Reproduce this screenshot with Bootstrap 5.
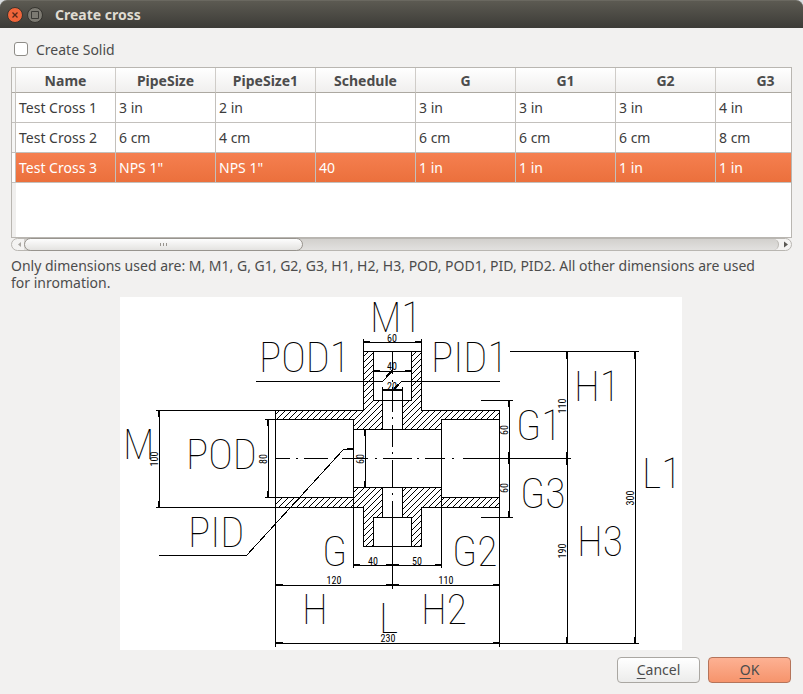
<!DOCTYPE html>
<html lang="en">
<head>
<meta charset="utf-8">
<meta name="viewport" content="width=device-width, initial-scale=1">
<title>Create cross</title>
<link href="https://cdn.jsdelivr.net/npm/bootstrap@5.3.0/dist/css/bootstrap.min.css" rel="stylesheet">
<style>
  body { background: #f2f1f0; color: #4c4c4c; font-family: "Noto Sans", "Open Sans", sans-serif; font-size: 14px; line-height: 17px; }
  .titlebar { height: 28px; padding: 0 7px; background: linear-gradient(#5c5a52, #3c3b37); border-top: 1px solid #6a6860; border-radius: 7px 7px 0 0; color: #dfdbd2; }
  .titlebar h1 { font-size: 14px; line-height: 20px; }
  .backdrop { background: #d9dde0; }
  .win-btn { width: 16px; height: 16px; border: 0; padding: 0; background: none; }
  .content-pad { padding: 11px; }
  .solid-row { height: 20px; margin: 0 0 8px 3px; gap: 8px; }
  .solid-row .form-check-input { width: 14px; height: 14px; border: 1px solid #8f8d88; border-radius: 3px; }
  .grid-frame { height: 171px; border: 1px solid #b9b6b1; background: linear-gradient(90deg, #f0efee 4px, #fff 4px); overflow: hidden; }
  .dims { width: 804px; table-layout: fixed; border-collapse: separate; border-spacing: 0; color: #3c3c3c; }
  .dims th { height: 25px; padding: 0; text-align: center; color: #4c4c4c; background: linear-gradient(#fff, #f0efee); border-right: 1px solid #cfccc8; border-bottom: 1px solid #aca8a1; }
  .dims td { height: 30px; padding: 0 3px; border-right: 1px solid #c3c0bc; border-bottom: 1px solid #c3c0bc; white-space: nowrap; }
  .dims .stub { width: 4px; padding: 0; background: #f6f6f5; }
  .dims .picked td { color: #fff; background: linear-gradient(#f57f50, #eb703c); }
  .dims .picked .stub { background: #fff; }
  .scroller { height: 13px; border: 1px solid #b9b6b1; border-radius: 7px; background: #f4f3f2; }
  .scroller button { width: 12px; border: 0; padding: 0; background: none; line-height: 0; }
  .scroller .track { border-right: 1px solid #b9b6b1; border-radius: 0 7px 7px 0; background: linear-gradient(#d2d0cd, #e2e1df); }
  .thumb { width: 37%; margin: -1px 0; border: 1px solid #98948e; border-radius: 7px; background: linear-gradient(#fdfdfd, #e4e3e1); line-height: 0; }
  .note { margin: 6px 0; padding-right: 16px; }
  .lower { padding-right: 1px; }
  .drawing { max-width: 562px; background: #fff; overflow: visible; }
  .actions { margin-top: 7px; gap: 8px; }
  .dlg-btn { width: 83px; height: 26px; padding: 0; font-size: 14px; line-height: 22px; color: #4c4c4c; border: 1px solid #aaa7a2; border-radius: 4px; background: linear-gradient(#fff, #ececeb); }
  .dlg-btn.accept { border-color: #b5745a; background: linear-gradient(#fdb193, #f6946c); }
  .dlg-btn u { text-underline-offset: 3px; }
  .ln { fill: none; stroke: #000; stroke-width: 1; shape-rendering: crispEdges; }
  .tick { stroke-width: 2; }
  .big { font-family: "Roboto Condensed", "Roboto", sans-serif; font-weight: 100; font-size: 42px; fill: #000; }
  .num { font-family: "Roboto Condensed", "Roboto", sans-serif; font-size: 10px; text-anchor: middle; fill: #000; }
</style>
</head>
<body>
<div class="backdrop">
  <header class="titlebar d-flex align-items-center">
    <button class="win-btn me-1" type="button" aria-label="Close">
      <svg class="d-block" width="16" height="16" viewBox="0 0 16 16"><circle cx="8" cy="8" r="7.5" fill="#f0653a" stroke="#35342f"/><path d="M5.500 5.500l5 5m0-5l-5 5" stroke="#57291a" stroke-width="1.300"/></svg>
    </button>
    <button class="win-btn me-2" type="button" aria-label="Maximize">
      <svg class="d-block" width="16" height="16" viewBox="0 0 16 16"><circle cx="8" cy="8" r="7.500" fill="#7c7a72" stroke="#35342f"/><path d="M4.500 4.500h7v7h-7z" fill="none" stroke="#3b3a36"/></svg>
    </button>
    <h1 class="m-0 ms-1 fw-bold">Create cross</h1>
  </header>
</div>
<main class="content-pad">
  <div class="solid-row d-flex align-items-center">
    <input class="form-check-input m-0" type="checkbox" id="solid">
    <label for="solid">Create Solid</label>
  </div>
  <div class="grid-frame">
    <table class="dims">
      <thead><tr><th class="stub"></th><th>Name</th><th>PipeSize</th><th>PipeSize1</th><th>Schedule</th><th>G</th><th>G1</th><th>G2</th><th>G3</th></tr></thead>
      <tbody>
        <tr><td class="stub"></td><td>Test Cross 1</td><td>3 in</td><td>2 in</td><td></td><td>3 in</td><td>3 in</td><td>3 in</td><td>4 in</td></tr>
        <tr><td class="stub"></td><td>Test Cross 2</td><td>6 cm</td><td>4 cm</td><td></td><td>6 cm</td><td>6 cm</td><td>6 cm</td><td>8 cm</td></tr>
        <tr class="picked"><td class="stub"></td><td>Test Cross 3</td><td>NPS 1"</td><td>NPS 1"</td><td>40</td><td>1 in</td><td>1 in</td><td>1 in</td><td>1 in</td></tr>
      </tbody>
    </table>
  </div>
  <div class="scroller d-flex">
    <button type="button" aria-label="Scroll left"><svg width="11" height="11"><path d="M8 3v5L5 5.500z" fill="#aaa7a2"/></svg></button>
    <div class="track d-flex flex-grow-1">
      <div class="thumb d-flex align-items-center justify-content-center"><svg width="9" height="5"><path d="M1.500 1v3M4.500 1v3M7.500 1v3" stroke="#98948e" shape-rendering="crispEdges"/></svg></div>
    </div>
    <button type="button" aria-label="Scroll right"><svg width="11" height="11"><path d="M4 2.500v6L8 5.500z" fill="#5a5854"/></svg></button>
  </div>
  <p class="note">Only dimensions used are: M, M1, G, G1, G2, G3, H1, H2, H3, POD, POD1, PID, PID2. All other dimensions are used for inromation.</p>
  <div class="lower">
  <svg class="drawing d-block w-100 mx-auto" viewBox="120 297 562 353" role="img" aria-label="Pipe cross dimensions">
    <defs>
      <pattern id="hatch" width="6" height="6" patternUnits="userSpaceOnUse"><path d="M0 6L6 0M-1 1L1 -1M5 7L7 5" stroke="#000" fill="none" shape-rendering="crispEdges"/></pattern>
    </defs>
    <!-- dimension names -->
    <g class="big">
      <text x="370" y="332">M1</text>
      <text x="259" y="372">POD1</text>
      <text x="431" y="372">PID1</text>
      <text x="574" y="401">H1</text>
      <text x="516" y="440">G1</text>
      <text x="520" y="508">G3</text>
      <text x="642" y="488">L1</text>
      <text x="577" y="556">H3</text>
      <text x="123" y="459">M</text>
      <text x="186" y="469">POD</text>
      <text x="188" y="547">PID</text>
      <text x="322" y="566">G</text>
      <text x="452" y="566">G2</text>
      <text x="302" y="624">H</text>
      <text x="421" y="624">H2</text>
      <text x="379" y="633">L</text>
    </g>
    <!-- cut walls of the fitting -->
    <g class="ln">
      <g fill="url(#hatch)">
        <path d="M275.500 410.500H363.500V351.500H373.500V400.500H382.500V429.500H353.500V419.500H275.500Z"/>
        <path d="M499.500 410.500H421.500V351.500H411.500V400.500H402.500V429.500H441.500V419.500H499.500Z"/>
        <path d="M275.500 507.500H363.500V546.500H373.500V517.500H382.500V487.500H353.500V497.500H275.500Z"/>
        <path d="M499.500 507.500H421.500V546.500H411.500V517.500H402.500V487.500H441.500V497.500H499.500Z"/>
      </g>
      <path d="M363.500 351.500H421.500M373.500 400.500H411.500M373.500 517.500H411.500M363.500 546.500H421.500M353.500 419.500V568M441.500 419.500V568M382.500 429.500H402.500M353.500 487.500H441.500"/>
      <!-- centre lines -->
      <path d="M275 458.500h15m6 0h2m6 0h24m6 0h2m6 0h26m7 0h2m6 0h29m5 0h2m6 0h20m7 0h2m9 0H571"/>
      <path d="M392.500 352v22m0 6v2m0 5v25m0 5v2m0 6v22m0 5v2m0 6v27m0 6v2m0 6V589"/>
      <!-- extension and dimension lines -->
      <path d="M363.500 339V351M421.500 339V351M363.500 342.500H421.500M373.500 371.500H411.500M382.500 387V401M402.500 387V401M382.500 390.500H402.500"/>
      <path d="M256 381.500H382.500L392.500 371.500M500 381.500H401.500L393.500 389.500"/>
      <path d="M156 410.500H276M156 507.500H276M159.500 410V508M265 419.500H276M265 497.500H276M268.500 419V498M365.500 429V488"/>
      <path d="M159 555.500H246.500L343.500 449.500H354"/>
      <path d="M481 400.500H513M481 517.500H513M509.500 400V518M510 351.500H639M567.500 351V644M635.500 351V644"/>
      <path d="M275.500 410V647M499.500 410V647M353 565.500H442M275 585.500H500M275 643.500H639"/>
      <g class="tick">
        <path d="M364 342H370M415 342H422M374 371H380M405 371H412M383 390H402M386 377L392 371M394 389L398 385M347 449H353"/>
        <path d="M159 411V417M159 501V507M268 420V426M268 491V497M365 430V436M365 481V487M509 401V407M509 452V464M509 511V517"/>
        <path d="M567 352V359M567 452V465M567 637V643M635 352V359M635 637V643"/>
        <path d="M354 565H360M386 565H399M435 565H441M276 585H283M386 585H399M493 585H499M276 643H283M493 643H499"/>
      </g>
    </g>
    <!-- nominal values -->
    <g class="num">
      <text x="392" y="342">60</text>
      <text x="392" y="370">40</text>
      <text x="392" y="390">20</text>
      <text x="373" y="565">40</text>
      <text x="417" y="565">50</text>
      <text x="334" y="584">120</text>
      <text x="446" y="584">110</text>
      <text x="388" y="642">230</text>
      <text transform="translate(158 459) rotate(-90)">100</text>
      <text transform="translate(267 459) rotate(-90)">80</text>
      <text transform="translate(364 459) rotate(-90)">60</text>
      <text transform="translate(508 430) rotate(-90)">60</text>
      <text transform="translate(508 488) rotate(-90)">60</text>
      <text transform="translate(566 406) rotate(-90)">110</text>
      <text transform="translate(566 551) rotate(-90)">190</text>
      <text transform="translate(634 498) rotate(-90)">300</text>
    </g>
  </svg>
  <div class="actions d-flex justify-content-end">
    <button class="btn dlg-btn" type="button"><u>C</u>ancel</button>
    <button class="btn dlg-btn accept" type="button"><u>O</u>K</button>
  </div>
  </div>
</main>
<script src="https://cdn.jsdelivr.net/npm/bootstrap@5.3.0/dist/js/bootstrap.bundle.min.js"></script>
</body>
</html>
